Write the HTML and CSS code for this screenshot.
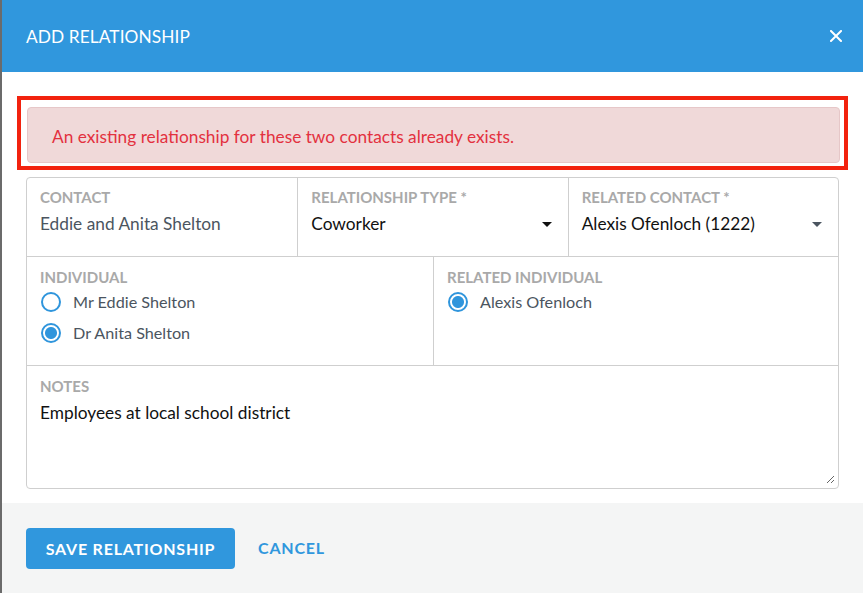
FILE: index.html
```html
<!DOCTYPE html>
<html lang="en">
<head>
  <meta charset="UTF-8">
  <title>Add Relationship</title>
  <link rel="stylesheet" href="styles.css">
</head>
<body>
  <div class="modal">
    <div class="modal-header">
      <span class="modal-title">ADD RELATIONSHIP</span>
      <svg class="close" width="12" height="12" viewBox="0 0 12 12">
        <path d="M1 1 L11 11 M11 1 L1 11" stroke="#fff" stroke-width="2" stroke-linecap="square"/>
      </svg>
    </div>

    <div class="modal-body">
      <div class="highlight">
        <div class="alert">An existing relationship for these two contacts already exists.</div>
      </div>

      <div class="form-grid">
        <div class="row three">
          <div class="cell">
            <div class="label">Contact</div>
            <div class="value">Eddie and Anita Shelton</div>
          </div>
          <div class="cell">
            <div class="label">Relationship Type *</div>
            <div class="select">
              <span class="value dark">Coworker</span>
              <span class="caret"></span>
            </div>
          </div>
          <div class="cell">
            <div class="label">Related Contact *</div>
            <div class="select">
              <span class="value dark">Alexis Ofenloch (1222)</span>
              <span class="caret slate"></span>
            </div>
          </div>
        </div>

        <div class="row two">
          <div class="cell tall">
            <div class="label">Individual</div>
            <div class="radio"><span class="dot"></span>Mr Eddie Shelton</div>
            <div class="radio"><span class="dot on"></span>Dr Anita Shelton</div>
          </div>
          <div class="cell tall">
            <div class="label">Related Individual</div>
            <div class="radio"><span class="dot on"></span>Alexis Ofenloch</div>
          </div>
        </div>

        <div class="notes">
          <div class="label">Notes</div>
          <textarea class="notes-text">Employees at local school district</textarea>
        </div>
      </div>
    </div>

    <div class="modal-footer">
      <button class="btn-save">SAVE RELATIONSHIP</button>
      <span class="btn-cancel">CANCEL</span>
    </div>
  </div>
</body>
</html>
```

FILE: styles.css
```css
html, body {
  margin: 0;
  padding: 0;
  height: 100%;
  background: #fff;
  font-family: Lato, 'Open Sans', sans-serif;
}

.modal {
  height: 593px;
  border-left: 2px solid #6b6b6b;
  display: flex;
  flex-direction: column;
  box-sizing: border-box;
}

.modal-header {
  height: 72px;
  flex-shrink: 0;
  background: #3097dd;
  display: flex;
  align-items: center;
  justify-content: space-between;
  padding: 0 21px 0 24px;
}

.modal-title {
  color: #fff;
  font-size: 17.3px;
  letter-spacing: 0.1px;
}

.modal-body {
  padding: 24px 24px 14px 15px;
  background: #fff;
}

.highlight {
  border: 4px solid #f2220e;
  padding: 7px 4px 3px 6px;
  margin-right: -9px;
}

.alert {
  height: 54px;
  display: flex;
  align-items: center;
  padding: 2px 0 0 24px;
  box-sizing: border-box;
  height: 56px;
  background: #f0d9d9;
  border: 1px solid #e6c7c8;
  border-radius: 4px;
  color: #e3313f;
  font-size: 17.3px;
}

.form-grid {
  margin: 7px 0 0 9px;
  border: 1px solid #cfcfcf;
  border-radius: 4px;
}

.row {
  display: grid;
  border-bottom: 1px solid #cfcfcf;
}

.row.three { grid-template-columns: 1fr 1fr 1fr; }
.row.two { grid-template-columns: 406px 1fr; }

.cell {
  height: 78px;
  padding: 10px 13px 0 13px;
  box-sizing: border-box;
  border-left: 1px solid #cfcfcf;
}

.cell:first-child { border-left: none; }

.cell.tall {
  height: 108px;
  padding-top: 11px;
}

.label {
  font-size: 15px;
  font-weight: bold;
  color: #a9a9a9;
  text-transform: uppercase;
  line-height: 18px;
  margin-bottom: 4px;
}

.row.three .label { margin-bottom: 6px; }

.value {
  font-size: 17.3px;
  color: #4b5560;
  line-height: 24px;
}

.value.dark { color: #111; }

.select {
  display: flex;
  align-items: center;
  justify-content: space-between;
  padding-right: 3px;
}

.caret {
  width: 0;
  height: 0;
  border-left: 5px solid transparent;
  border-right: 5px solid transparent;
  border-top: 5px solid #111;
}

.caret.slate { border-top-color: #4b5560; }

.radio {
  display: flex;
  align-items: center;
  gap: 12px;
  height: 31px;
  font-size: 16.2px;
  color: #4b5560;
  margin-top: -4px;
  margin-bottom: 4px;
}

.radio + .radio { margin-top: -4px; }

.dot {
  width: 20px;
  height: 20px;
  margin-left: 1px;
  box-sizing: border-box;
  border: 2px solid #2f95dc;
  border-radius: 50%;
  background: #fff;
}

.dot.on {
  background: radial-gradient(circle, #2f95dc 0 5.5px, #fff 6.5px);
}

.notes {
  height: 122px;
  padding: 11px 13px 0 13px;
  box-sizing: border-box;
  display: flex;
  flex-direction: column;
}

.notes-text {
  flex: 1;
  border: none;
  outline: none;
  padding: 0;
  margin: 3px -10px 4px 0;
  font-family: Lato, 'Open Sans', sans-serif;
  font-size: 17.3px;
  color: #111;
  resize: vertical;
  background: transparent;
}

.modal-footer {
  flex: 1;
  background: #f4f5f5;
  display: flex;
  align-items: flex-start;
  gap: 23px;
  padding: 25px 24px 0 24px;
}

.btn-save {
  height: 41px;
  width: 209px;
  padding-bottom: 2px;
  border: none;
  border-radius: 4px;
  background: #3097dd;
  color: #fff;
  font-family: Lato, 'Open Sans', sans-serif;
  font-size: 16px;
  font-weight: bold;
  letter-spacing: 0.8px;
}

.btn-cancel {
  line-height: 39px;
  color: #3097dd;
  font-size: 16px;
  font-weight: bold;
  letter-spacing: 0.8px;
}
```
